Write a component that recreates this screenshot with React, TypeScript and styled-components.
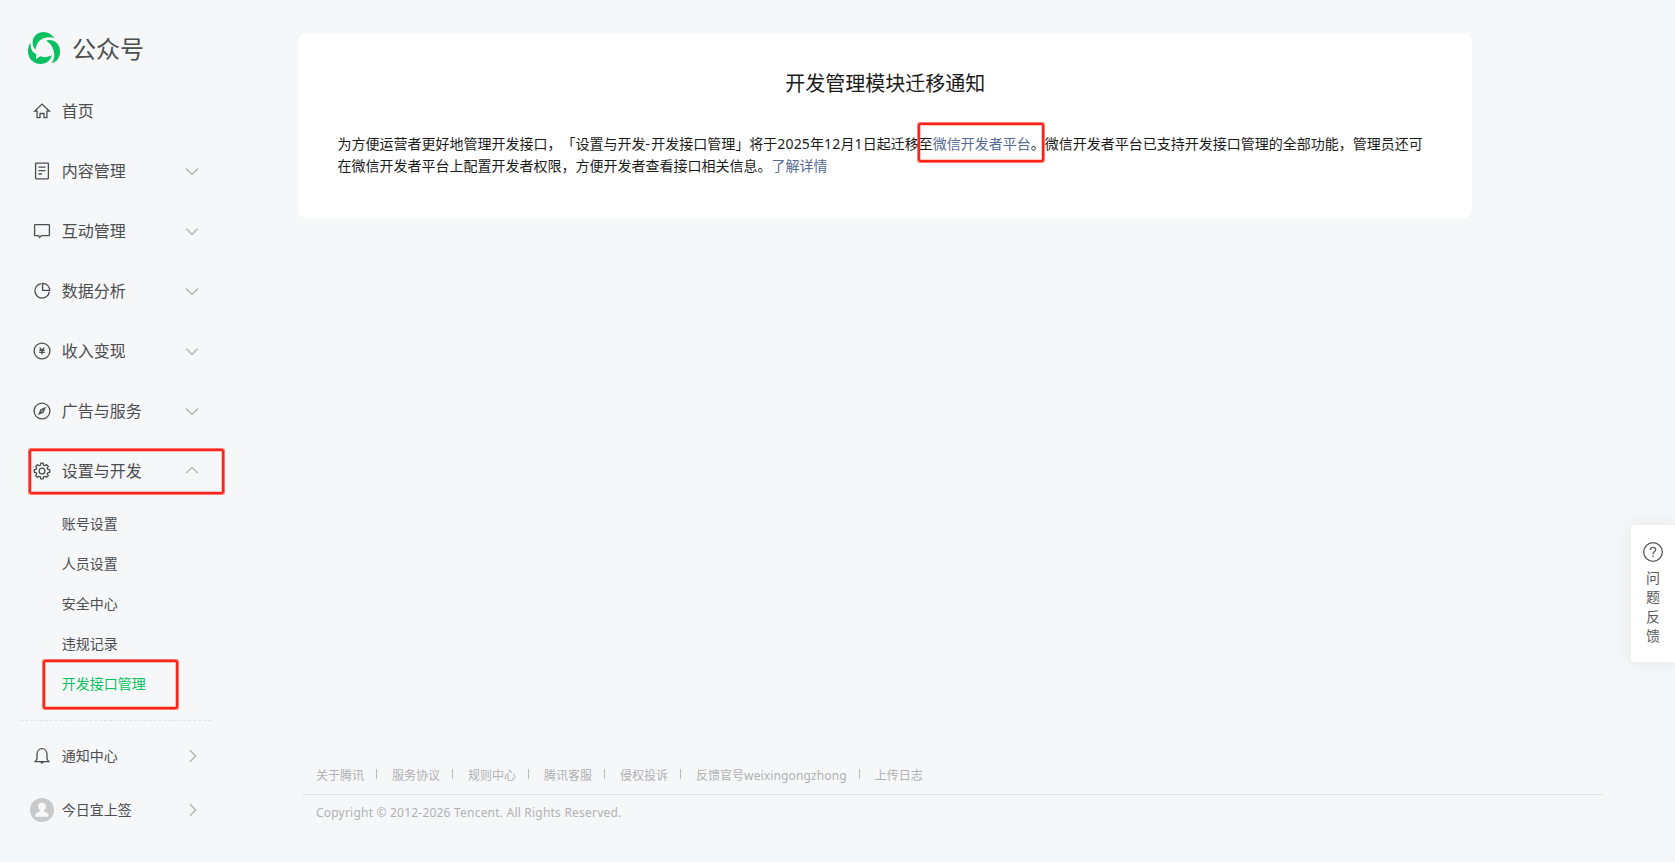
import React from "react";
import styled, { createGlobalStyle } from "styled-components";

const GlobalStyle = createGlobalStyle`
  * { box-sizing: border-box; }
  body {
    margin: 0;
    background: #f6f7f9;
    color: #4c4d4e;
    font-family: "Noto Sans", "Noto Sans CJK SC", sans-serif;
    font-size: 14px;
    overflow: hidden;
    text-spacing-trim: space-all;
  }
`;

const Page = styled.div`
  position: relative;
  display: flex;
  width: 100%;
  height: 862px;
  overflow: hidden;
`;

const Sidebar = styled.aside`
  width: 240px;
  flex: none;
  padding-top: 28px;
`;

const Brand = styled.div`
  display: flex;
  align-items: center;
  gap: 12px;
  height: 40px;
  padding-left: 28px;
  margin-bottom: 13px;
  font-size: 24px;
  line-height: 40px;
  svg { display: block; }
`;

const BrandName = styled.span`
  padding-top: 1px;
`;

const MenuItem = styled.div<{ $height: number; $small?: boolean }>`
  display: flex;
  align-items: center;
  height: ${(p) => p.$height}px;
  padding: 0 41px 0 30px;
  font-size: ${(p) => (p.$small ? 14 : 16)}px;
  line-height: 24px;
`;

const IconSlot = styled.span`
  display: flex;
  justify-content: center;
  flex: none;
  width: 24px;
  margin-right: 7.8px;
`;

const Label = styled.span`
  flex: 1;
`;

const SubItem = styled.div<{ $active?: boolean }>`
  height: 40px;
  padding-left: 61.8px;
  line-height: 40px;
  color: ${(p) => (p.$active ? "#07c160" : "inherit")};
`;

const SubMenu = styled.div`
  padding-top: 3px;
`;

const Divider = styled.div`
  width: 191px;
  margin: 16px 0 8px 20px;
  border-top: 1px dashed #e2e3e5;
`;

const Main = styled.main`
  display: flex;
  flex: 1;
  flex-direction: column;
  justify-content: space-between;
  padding: 33px 0 39px 58px;
`;

const Card = styled.section`
  width: 1174px;
  height: 185px;
  padding: 37px 39px 0 39.5px;
  border-radius: 8px;
  background: #fff;
  color: #1a1a1a;
`;

const CardTitle = styled.h1`
  margin: 0 0 35px;
  font-size: 20px;
  font-weight: 400;
  line-height: 28px;
  text-align: center;
`;

const Notice = styled.p`
  margin: 0;
  line-height: 22.4px;
`;

const NoticeLine = styled.span`
  display: block;
  white-space: nowrap;
`;

const Digits = styled.span<{ $spacing: number }>`
  letter-spacing: ${(p) => p.$spacing}px;
`;

const Link = styled.a`
  color: #576b95;
`;

const Footer = styled.footer`
  width: 1301px;
  margin-left: 4px;
  color: #b0b1b3;
  font-size: 12px;
`;

const FooterLinks = styled.nav`
  display: flex;
  align-items: center;
  height: 38px;
  padding: 0 0 0 14px;
  border-bottom: 1px solid #e2e3e5;
`;

const FooterLink = styled.a`
  display: flex;
  align-items: center;
  line-height: 18px;
  &:not(:last-child)::after {
    content: "";
    width: 1px;
    height: 10px;
    margin: -4px 15px 0 12px;
    background: #bcbdc0;
  }
`;

const Latin = styled.span<{ $spacing: number }>`
  letter-spacing: ${(p) => p.$spacing}px;
`;

const Copyright = styled.div`
  padding: 8px 14px 0;
  line-height: 20px;
`;

const Feedback = styled.div`
  position: absolute;
  top: 525px;
  right: 0;
  display: flex;
  flex-direction: column;
  align-items: center;
  width: 44px;
  height: 137px;
  padding-top: 17px;
  border-radius: 4px 0 0 4px;
  background: #fff;
  box-shadow: 0 0 20px rgba(0, 0, 0, 0.08);
  color: #5a5a5a;
`;

const FeedbackText = styled.div`
  width: 14px;
  margin-top: 6px;
  line-height: 19.4px;
`;

const Marker = styled.div<{ $x: number; $y: number; $w: number; $h: number }>`
  position: absolute;
  left: ${(p) => p.$x}px;
  top: ${(p) => p.$y}px;
  width: ${(p) => p.$w}px;
  height: ${(p) => p.$h}px;
  border: 2px solid #ff2317;
  border-radius: 2px;
  box-shadow: 0 0 0 1px rgba(255, 35, 23, 0.6), inset 0 0 0 0.5px rgba(255, 35, 23, 0.5);
  pointer-events: none;
`;

const Logo = () => (
  <svg width="32" height="32" viewBox="0 0 96 96" fill="#07c160">
    <path d="M23 53C16 46 13 38 14 29C16 11 30 0 46 0C60 0 71 7 79 18C66 14 54 15 44 20C31 26 24 37 23 53Z" />
    <path d="M54 26C74 19 96 34 96 57C96 77 87 91 70 93C79 83 81 70 77 56C73 41 66 32 54 26Z" />
    <path d="M7 32C7 50 13 61 25 67L24 82L36 73C48 77 60 76 72 70C66 87 54 96 38 96C16 96 0 80 0 58C0 48 2 39 7 32Z" />
  </svg>
);

const Chevron = ({ dir = "down" }: { dir?: "down" | "up" | "right" }) => (
  <svg width="14" height="14" viewBox="0 0 14 14" fill="none" stroke="#b2b3b5" strokeWidth="1.3">
    {dir === "down" && <path d="M1.2 4.7L7 10.3L12.8 4.7" />}
    {dir === "up" && <path d="M1.2 9L7 3.4L12.8 9" />}
    {dir === "right" && <path d="M5 1.2L10.7 7L5 12.8" />}
  </svg>
);

const gearPath = (() => {
  const points: string[] = [];
  const teeth = 8;
  for (let i = 0; i < teeth; i++) {
    const steps: [number, number][] = [[-0.32, 6.1], [-0.2, 7.9], [0.2, 7.9], [0.32, 6.1]];
    steps.forEach(([offset, radius]) => {
      const angle = ((i + offset) / teeth) * Math.PI * 2;
      points.push(`${(9 + radius * Math.sin(angle)).toFixed(2)} ${(9 - radius * Math.cos(angle)).toFixed(2)}`);
    });
  }
  return `M${points.join("L")}Z`;
})();

const shapes: Record<string, React.ReactNode> = {
  home: <path d="M1.6 9.2L9 2.1L16.4 9.2H13.9V15.7H11V11.5H7V15.7H4.1V9.2Z" />,
  doc: <><rect x="2.6" y="1.2" width="12.8" height="15.6" rx="0.5" /><path d="M5.5 5.2H12.5M5.5 8.6H12.5M5.5 12H9" /></>,
  chat: <path d="M2.2 2.7H15.8Q16.4 2.7 16.4 3.3V13Q16.4 13.6 15.8 13.6H8.6L6.6 15.5L5.6 13.6H2.2Q1.6 13.6 1.6 13V3.3Q1.6 2.7 2.2 2.7Z" />,
  pie: <><path d="M8.3 1.7A7.2 7.2 0 1 0 16.3 9.7" /><path d="M9.6 1.3A7 7 0 0 1 16.7 8.4H9.6Z" /></>,
  yen: <><circle cx="9" cy="9" r="7.9" /><path d="M6.7 5.6L9 8.5L11.3 5.6M9 8.5V12.6M6.2 8.3H11.8M6.2 10.4H11.8" /></>,
  compass: <><circle cx="9" cy="9" r="7.9" /><path d="M12.9 5.1L10.5 10.5L7.5 7.5Z" fill="#4c4d4e" strokeWidth="0.3" /><path d="M5.1 12.9L7.5 7.5L10.5 10.5Z" strokeWidth="0.3" fill="#4c4d4e" /><circle cx="9" cy="9" r="0.8" fill="#f6f7f9" stroke="none" /></>,
  gear: <><path d={gearPath} strokeLinejoin="round" /><circle cx="9" cy="9" r="2.9" /></>,
  bell: <><path d="M2.2 14.6H15.8L14 12V7.5C14 4.2 12 1.7 9 1.7S4 4.2 4 7.5V12Z" /><path d="M7.3 15.3Q9 17.8 10.7 15.3Z" fill="#4c4d4e" strokeWidth="0.4" /></>,
};

const Icon = ({ name }: { name: string }) => (
  <svg width="18" height="18" viewBox="0 0 18 18" fill="none" stroke="#4c4d4e" strokeWidth="1.3">
    {shapes[name]}
  </svg>
);

const Avatar = () => (
  <svg width="24" height="24" viewBox="0 0 24 24">
    <circle cx="12" cy="12" r="12" fill="#c9c9c9" />
    <path d="M12 4.5C9.7 4.5 8.2 6.1 8.2 8.4C8.2 10 9 11.3 9.9 12.2V13.3L6.4 15.2Q5.6 15.8 5.6 16.8V18.7H18.4V16.8Q18.4 15.8 17.6 15.2L14.1 13.3V12.2C15 11.3 15.8 10 15.8 8.4C15.8 6.1 14.3 4.5 12 4.5Z" fill="#f6f7f9" />
  </svg>
);

const menu = [
  { icon: "doc", label: "内容管理" },
  { icon: "chat", label: "互动管理" },
  { icon: "pie", label: "数据分析" },
  { icon: "yen", label: "收入变现" },
  { icon: "compass", label: "广告与服务" },
];

const footerLinks = ["关于腾讯", "服务协议", "规则中心", "腾讯客服", "侵权投诉"];

export default function App() {
  return (
    <Page>
      <GlobalStyle />
      <Sidebar>
        <Brand><Logo /><BrandName>公众号</BrandName></Brand>
        <MenuItem $height={60}><IconSlot><Icon name="home" /></IconSlot><Label>首页</Label></MenuItem>
        {menu.map((m) => (
          <MenuItem key={m.icon} $height={60}>
            <IconSlot><Icon name={m.icon} /></IconSlot>
            <Label>{m.label}</Label>
            <Chevron />
          </MenuItem>
        ))}
        <MenuItem $height={60}>
          <IconSlot><Icon name="gear" /></IconSlot>
          <Label>设置与开发</Label>
          <Chevron dir="up" />
        </MenuItem>
        <SubMenu>
          <SubItem>账号设置</SubItem>
          <SubItem>人员设置</SubItem>
          <SubItem>安全中心</SubItem>
          <SubItem>违规记录</SubItem>
          <SubItem $active>开发接口管理</SubItem>
        </SubMenu>
        <Divider />
        <MenuItem $height={54} $small><IconSlot><Icon name="bell" /></IconSlot><Label>通知中心</Label><Chevron dir="right" /></MenuItem>
        <MenuItem $height={54} $small><IconSlot><Avatar /></IconSlot><Label>今日宜上签</Label><Chevron dir="right" /></MenuItem>
      </Sidebar>
      <Main>
        <Card>
          <CardTitle>开发管理模块迁移通知</CardTitle>
          <Notice>
            <NoticeLine>
              为方便运营者更好地管理开发接口，「设置与开发<Digits $spacing={1.2}>-</Digits>开发接口管理」将于<Digits $spacing={0.2}>2025</Digits>年<Digits $spacing={0.2}>12</Digits>月<Digits $spacing={0.2}>1</Digits>日起迁移至<Link>微信开发者平台</Link>。微信开发者平台已支持开发接口管理的全部功能，管理员还可
            </NoticeLine>
            <NoticeLine>
              在微信开发者平台上配置开发者权限，方便开发者查看接口相关信息。<Link>了解详情</Link>
            </NoticeLine>
          </Notice>
        </Card>
        <Footer>
          <FooterLinks>
            {footerLinks.map((t) => <FooterLink key={t}>{t}</FooterLink>)}
            <FooterLink>反馈官号<Latin $spacing={0.13}>weixingongzhong</Latin></FooterLink>
            <FooterLink>上传日志</FooterLink>
          </FooterLinks>
          <Copyright><Latin $spacing={0.21}>Copyright © 2012-2026 Tencent. All Rights Reserved.</Latin></Copyright>
        </Footer>
      </Main>
      <Feedback>
        <svg width="20" height="20" viewBox="0 0 20 20" fill="none" stroke="#5a5a5a" strokeWidth="1.3">
          <circle cx="10" cy="10" r="9.3" />
          <path d="M7.3 7.9C7.3 6.2 8.4 5.3 10 5.3S12.7 6.3 12.7 7.7C12.7 9.6 10 9.7 10 12.2M10 13.6V15" />
        </svg>
        <FeedbackText>问题反馈</FeedbackText>
      </Feedback>
      <Marker $x={29} $y={449} $w={195} $h={45} />
      <Marker $x={43} $y={660} $w={135} $h={49} />
      <Marker $x={918} $y={123} $w={126} $h={39} />
    </Page>
  );
}
